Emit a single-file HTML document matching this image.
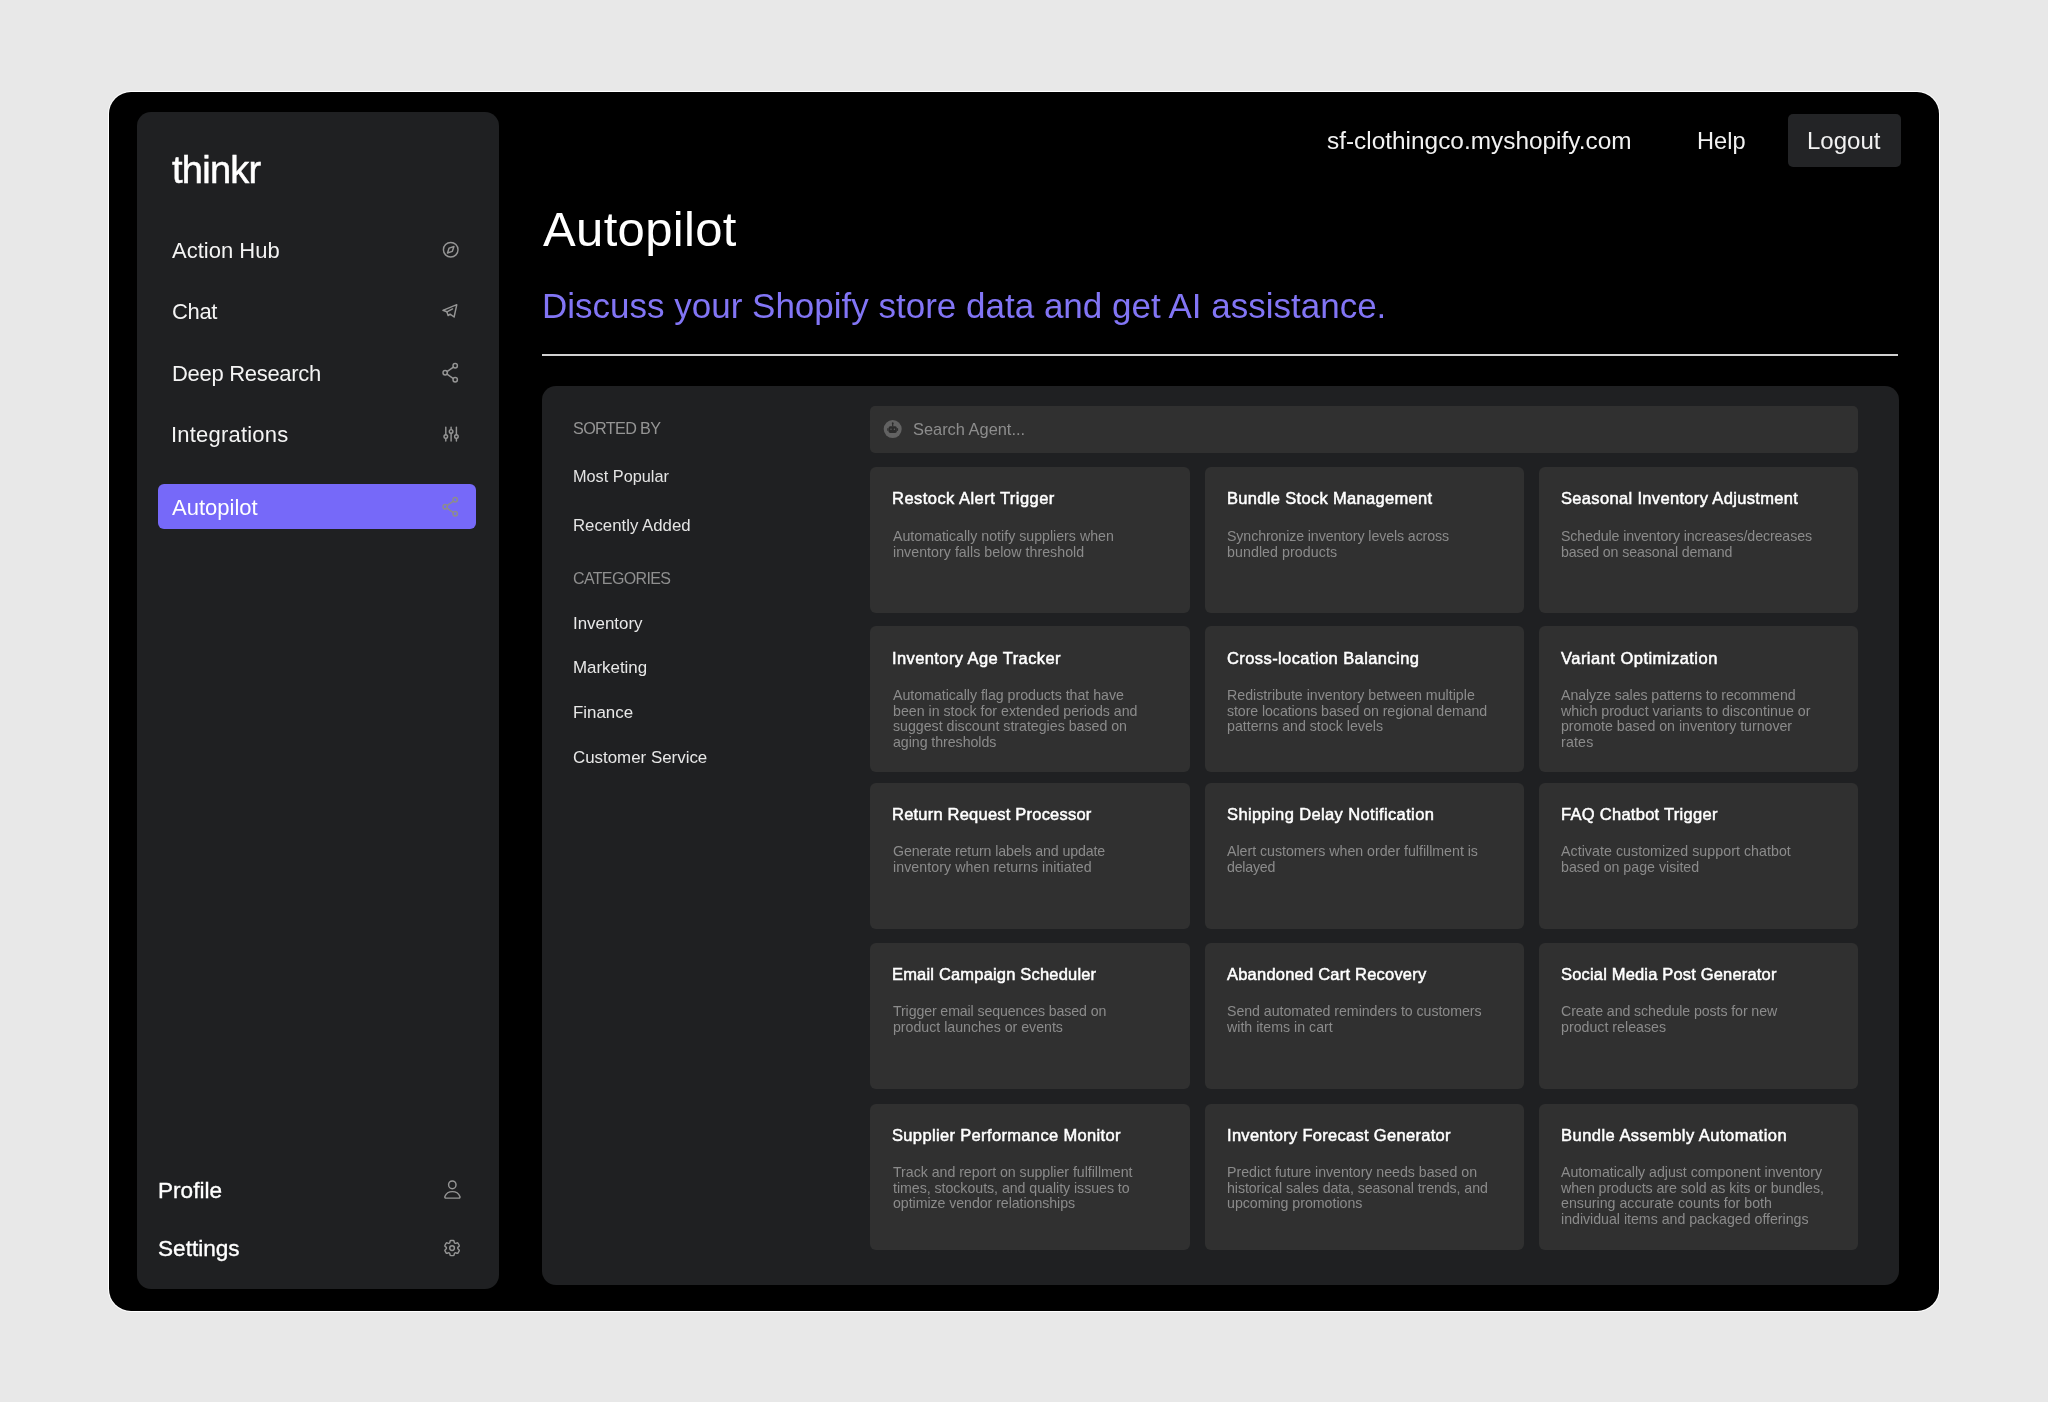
<!DOCTYPE html>
<html><head><meta charset="utf-8"><title>thinkr - Autopilot</title>
<style>
html,body{margin:0;padding:0;}
body{width:2048px;height:1402px;background:#e8e8e8;position:relative;overflow:hidden;font-family:"Liberation Sans", sans-serif;}
.t{position:absolute;white-space:nowrap;will-change:transform;}
</style></head><body>
<div style="position:absolute;left:109px;top:92px;width:1830px;height:1218.5px;background:#000;border-radius:22px;box-shadow:0 0 0 1px #fff;"></div>
<div style="position:absolute;left:137px;top:112px;width:362px;height:1176.5px;background:#1f2022;border-radius:14px;"></div>
<div class="t" style="left:172.3px;top:146.00px;font-size:38px;line-height:48px;color:#fff;-webkit-text-stroke:0.5px #fff;letter-spacing:-0.74px">thinkr</div>
<div class="t" style="left:171.50px;top:237.00px;font-size:22px;line-height:28px;color:#f4f4f4;">Action Hub</div>
<div class="t" style="left:172.00px;top:298.00px;font-size:22px;line-height:28px;color:#f4f4f4;letter-spacing:-0.35px;">Chat</div>
<div class="t" style="left:171.50px;top:360.00px;font-size:22px;line-height:28px;color:#f4f4f4;letter-spacing:-0.3px;">Deep Research</div>
<div class="t" style="left:171.00px;top:421.00px;font-size:22px;line-height:28px;color:#f4f4f4;letter-spacing:0.2px;">Integrations</div>
<div style="position:absolute;left:158px;top:484px;width:318px;height:45px;background:#7669f9;border-radius:6px;"></div>
<div class="t" style="left:172.00px;top:494.00px;font-size:22px;line-height:28px;color:#fff;">Autopilot</div>
<div class="t" style="left:157.50px;top:1177.00px;font-size:22.6px;line-height:28px;color:#fff;-webkit-text-stroke:0.35px #fff;">Profile</div>
<div class="t" style="left:157.50px;top:1235.00px;font-size:22.6px;line-height:28px;color:#fff;-webkit-text-stroke:0.35px #fff;">Settings</div>
<svg style="position:absolute;left:440.68px;top:240.38px" width="19.44" height="19.44" viewBox="0 0 24 24" fill="none" stroke="#959595" stroke-width="1.790" stroke-linecap="round" stroke-linejoin="round"><path d="M8 16l2 -6l6 -2l-2 6l-6 2"/><circle cx="12" cy="12" r="9"/></svg>
<svg style="position:absolute;left:0;top:0;overflow:visible" width="1" height="1" fill="none" stroke="#959595" stroke-width="1.45" stroke-linecap="round" stroke-linejoin="round"><path d="M442.9 310.3 L456.8 304.7 L454.1 317.0 L450.1 314.2 L448.1 315.6 L446.9 311.8 Z"/><path d="M446.9 311.8 L452.6 308.9"/></svg>
<svg style="position:absolute;left:0;top:0;overflow:visible" width="1" height="1" fill="none" stroke="#959595" stroke-width="1.45" stroke-linecap="round"><circle cx="445.2" cy="372.8" r="2.2"/><circle cx="455.2" cy="365.8" r="2.2"/><circle cx="455.2" cy="379.8" r="2.2"/><line x1="447.00" y1="371.54" x2="453.40" y2="367.06"/><line x1="447.00" y1="374.06" x2="453.40" y2="378.54"/></svg>
<svg style="position:absolute;left:0;top:0;overflow:visible" width="1" height="1" fill="none" stroke="#8d8d8d" stroke-width="1.45" stroke-linecap="round"><circle cx="445.2" cy="506.8" r="2.2"/><circle cx="455.2" cy="499.8" r="2.2"/><circle cx="455.2" cy="513.8" r="2.2"/><line x1="447.00" y1="505.54" x2="453.40" y2="501.06"/><line x1="447.00" y1="508.06" x2="453.40" y2="512.54"/></svg>
<svg style="position:absolute;left:0;top:0;overflow:visible" width="1" height="1" fill="none" stroke="#959595" stroke-width="1.45" stroke-linecap="round"><line x1="445.8" y1="427.1" x2="445.8" y2="434.80"/><circle cx="445.8" cy="436.6" r="1.8"/><line x1="445.8" y1="438.40" x2="445.8" y2="440.9"/><line x1="451.1" y1="427.1" x2="451.1" y2="429.60"/><circle cx="451.1" cy="431.4" r="1.8"/><line x1="451.1" y1="433.20" x2="451.1" y2="440.9"/><line x1="456.4" y1="427.1" x2="456.4" y2="434.80"/><circle cx="456.4" cy="436.6" r="1.8"/><line x1="456.4" y1="438.40" x2="456.4" y2="440.9"/></svg>
<svg style="position:absolute;left:0;top:0;overflow:visible" width="1" height="1" fill="none" stroke="#959595" stroke-width="1.45" stroke-linejoin="round"><ellipse cx="452.3" cy="1184.8" rx="3.7" ry="3.9"/><path d="M446.2 1198.1 H458.6 Q460.4 1198.1 459.9 1196.5 C458.6 1193.2 455.8 1191.6 452.4 1191.6 C449 1191.6 446.2 1193.2 444.9 1196.5 Q444.4 1198.1 446.2 1198.1 Z"/></svg>
<svg style="position:absolute;left:442.42px;top:1237.72px" width="20.16" height="20.16" viewBox="0 0 24 24" fill="none" stroke="#959595" stroke-width="1.726" stroke-linecap="round" stroke-linejoin="round"><path d="M9.594 3.94c.09-.542.56-.94 1.11-.94h2.593c.55 0 1.02.398 1.11.94l.213 1.281c.063.374.313.686.645.87.074.04.147.083.22.127.325.196.72.257 1.075.124l1.217-.456a1.125 1.125 0 0 1 1.37.49l1.296 2.247a1.125 1.125 0 0 1-.26 1.431l-1.003.827c-.293.241-.438.613-.43.992a7.723 7.723 0 0 1 0 .255c-.008.378.137.75.43.991l1.004.827c.424.35.534.955.26 1.43l-1.298 2.247a1.125 1.125 0 0 1-1.369.491l-1.217-.456c-.355-.133-.75-.072-1.076.124a6.47 6.47 0 0 1-.22.128c-.331.183-.581.495-.644.869l-.213 1.281c-.09.543-.56.94-1.11.94h-2.594c-.55 0-1.019-.398-1.11-.94l-.213-1.281c-.062-.374-.312-.686-.644-.87a6.52 6.52 0 0 1-.22-.127c-.325-.196-.72-.257-1.076-.124l-1.217.456a1.125 1.125 0 0 1-1.369-.49l-1.297-2.247a1.125 1.125 0 0 1 .26-1.431l1.004-.827c.292-.24.437-.613.43-.991a6.932 6.932 0 0 1 0-.255c.007-.38-.138-.751-.43-.992l-1.004-.827a1.125 1.125 0 0 1-.26-1.43l1.297-2.247a1.125 1.125 0 0 1 1.37-.491l1.216.456c.356.133.751.072 1.076-.124.072-.044.146-.086.22-.128.332-.183.582-.495.644-.869l.214-1.28Z"/><circle cx="12" cy="12" r="2.8"/></svg>
<div class="t" style="left:1326.50px;top:126.00px;font-size:24.4px;line-height:30px;color:#f2f2f2;">sf-clothingco.myshopify.com</div>
<div class="t" style="left:1697.00px;top:126.00px;font-size:23.6px;line-height:30px;color:#f2f2f2;">Help</div>
<div style="position:absolute;left:1788px;top:114px;width:113px;height:53px;background:#232426;border-radius:5px;"></div>
<div class="t" style="left:1807.00px;top:126.00px;font-size:24px;line-height:30px;color:#f2f2f2;">Logout</div>
<div class="t" style="left:543.00px;top:199.00px;font-size:49px;line-height:61px;color:#fff;letter-spacing:0.35px;">Autopilot</div>
<div class="t" style="left:542.00px;top:284.00px;font-size:35px;line-height:44px;color:#8275f5;">Discuss your Shopify store data and get AI assistance.</div>
<div style="position:absolute;left:542px;top:354.2px;width:1356px;height:1.6999999999999886px;background:#d0d0d0;border-radius:0px;"></div>
<div style="position:absolute;left:542px;top:386px;width:1356.7px;height:899px;background:#1f2022;border-radius:14px;"></div>
<div class="t" style="left:573.00px;top:418.00px;font-size:16.2px;line-height:20px;color:#959595;letter-spacing:-0.65px;">SORTED BY</div>
<div class="t" style="left:572.50px;top:466.00px;font-size:16.3px;line-height:20px;color:#e4e4e4;">Most Popular</div>
<div class="t" style="left:572.50px;top:515.00px;font-size:16.8px;line-height:21px;color:#e4e4e4;">Recently Added</div>
<div class="t" style="left:573.00px;top:569.00px;font-size:16.0px;line-height:20px;color:#8f8f8f;letter-spacing:-0.65px;">CATEGORIES</div>
<div class="t" style="left:572.50px;top:613.00px;font-size:16.9px;line-height:21px;color:#e8e8e8;">Inventory</div>
<div class="t" style="left:572.50px;top:657.00px;font-size:16.9px;line-height:21px;color:#e8e8e8;">Marketing</div>
<div class="t" style="left:572.50px;top:702.00px;font-size:16.9px;line-height:21px;color:#e8e8e8;">Finance</div>
<div class="t" style="left:572.50px;top:747.00px;font-size:16.9px;line-height:21px;color:#e8e8e8;">Customer Service</div>
<div style="position:absolute;left:870px;top:405.7px;width:987.5999999999999px;height:47.19999999999999px;background:#303030;border-radius:5px;"></div>
<svg style="position:absolute;left:0;top:0;overflow:visible" width="1" height="1"><circle cx="892.7" cy="429.1" r="9" fill="#626262"/><rect x="888.6" y="426.3" width="8.2" height="6.6" rx="1.6" fill="#2b2b2b"/><line x1="892.7" y1="423.2" x2="892.7" y2="426.3" stroke="#2b2b2b" stroke-width="1.2"/><circle cx="892.7" cy="423.2" r="0.9" fill="#2b2b2b"/><rect x="887.3" y="428.2" width="1.2" height="2.6" fill="#2b2b2b"/><rect x="896.9" y="428.2" width="1.2" height="2.6" fill="#2b2b2b"/><circle cx="891" cy="429.3" r="0.7" fill="#626262"/><circle cx="894.4" cy="429.3" r="0.7" fill="#626262"/></svg>
<div class="t" style="left:912.50px;top:419.00px;font-size:16.4px;line-height:20px;color:#8d8d8d;">Search Agent...</div>
<div style="position:absolute;left:870.3px;top:467px;width:319.5px;height:146px;background:#303030;border-radius:6px;"></div>
<div class="t" style="left:892.30px;top:488.00px;font-size:16.5px;line-height:21px;color:#fff;letter-spacing:0.46px;-webkit-text-stroke:0.5px #fff;">Restock Alert Trigger</div>
<div class="t" style="left:892.50px;top:527.00px;font-size:14.2px;line-height:18px;color:#8b8b8b;letter-spacing:0.0px;">Automatically notify suppliers when</div>
<div class="t" style="left:892.50px;top:543.00px;font-size:14.2px;line-height:18px;color:#8b8b8b;letter-spacing:0.037px;">inventory falls below threshold</div>
<div style="position:absolute;left:1204.5px;top:467px;width:319.5px;height:146px;background:#303030;border-radius:6px;"></div>
<div class="t" style="left:1226.50px;top:488.00px;font-size:16.5px;line-height:21px;color:#fff;letter-spacing:0.319px;-webkit-text-stroke:0.5px #fff;">Bundle Stock Management</div>
<div class="t" style="left:1226.70px;top:527.00px;font-size:14.2px;line-height:18px;color:#8b8b8b;letter-spacing:-0.1px;">Synchronize inventory levels across</div>
<div class="t" style="left:1226.70px;top:543.00px;font-size:14.2px;line-height:18px;color:#8b8b8b;letter-spacing:0.079px;">bundled products</div>
<div style="position:absolute;left:1538.8px;top:467px;width:319.5px;height:146px;background:#303030;border-radius:6px;"></div>
<div class="t" style="left:1560.80px;top:488.00px;font-size:16.5px;line-height:21px;color:#fff;letter-spacing:0.335px;-webkit-text-stroke:0.5px #fff;">Seasonal Inventory Adjustment</div>
<div class="t" style="left:1561.00px;top:527.00px;font-size:14.2px;line-height:18px;color:#8b8b8b;letter-spacing:-0.1px;">Schedule inventory increases/decreases</div>
<div class="t" style="left:1561.00px;top:543.00px;font-size:14.2px;line-height:18px;color:#8b8b8b;letter-spacing:-0.127px;">based on seasonal demand</div>
<div style="position:absolute;left:870.3px;top:626px;width:319.5px;height:146px;background:#303030;border-radius:6px;"></div>
<div class="t" style="left:892.30px;top:648.00px;font-size:16.5px;line-height:21px;color:#fff;letter-spacing:0.4px;-webkit-text-stroke:0.5px #fff;">Inventory Age Tracker</div>
<div class="t" style="left:892.50px;top:686.00px;font-size:14.2px;line-height:18px;color:#8b8b8b;letter-spacing:-0.028px;">Automatically flag products that have</div>
<div class="t" style="left:892.50px;top:702.00px;font-size:14.2px;line-height:18px;color:#8b8b8b;letter-spacing:0.0px;">been in stock for extended periods and</div>
<div class="t" style="left:892.50px;top:717.00px;font-size:14.2px;line-height:18px;color:#8b8b8b;letter-spacing:-0.007px;">suggest discount strategies based on</div>
<div class="t" style="left:892.50px;top:733.00px;font-size:14.2px;line-height:18px;color:#8b8b8b;letter-spacing:-0.048px;">aging thresholds</div>
<div style="position:absolute;left:1204.5px;top:626px;width:319.5px;height:146px;background:#303030;border-radius:6px;"></div>
<div class="t" style="left:1226.50px;top:648.00px;font-size:16.5px;line-height:21px;color:#fff;letter-spacing:0.409px;-webkit-text-stroke:0.5px #fff;">Cross-location Balancing</div>
<div class="t" style="left:1226.70px;top:686.00px;font-size:14.2px;line-height:18px;color:#8b8b8b;letter-spacing:0.004px;">Redistribute inventory between multiple</div>
<div class="t" style="left:1226.70px;top:702.00px;font-size:14.2px;line-height:18px;color:#8b8b8b;letter-spacing:-0.082px;">store locations based on regional demand</div>
<div class="t" style="left:1226.70px;top:717.00px;font-size:14.2px;line-height:18px;color:#8b8b8b;letter-spacing:-0.006px;">patterns and stock levels</div>
<div style="position:absolute;left:1538.8px;top:626px;width:319.5px;height:146px;background:#303030;border-radius:6px;"></div>
<div class="t" style="left:1560.80px;top:648.00px;font-size:16.5px;line-height:21px;color:#fff;letter-spacing:0.473px;-webkit-text-stroke:0.5px #fff;">Variant Optimization</div>
<div class="t" style="left:1561.00px;top:686.00px;font-size:14.2px;line-height:18px;color:#8b8b8b;letter-spacing:-0.082px;">Analyze sales patterns to recommend</div>
<div class="t" style="left:1561.00px;top:702.00px;font-size:14.2px;line-height:18px;color:#8b8b8b;letter-spacing:0.004px;">which product variants to discontinue or</div>
<div class="t" style="left:1561.00px;top:717.00px;font-size:14.2px;line-height:18px;color:#8b8b8b;letter-spacing:-0.024px;">promote based on inventory turnover</div>
<div class="t" style="left:1561.00px;top:733.00px;font-size:14.2px;line-height:18px;color:#8b8b8b;letter-spacing:0.175px;">rates</div>
<div style="position:absolute;left:870.3px;top:783px;width:319.5px;height:146px;background:#303030;border-radius:6px;"></div>
<div class="t" style="left:892.30px;top:804.00px;font-size:16.5px;line-height:21px;color:#fff;letter-spacing:0.212px;-webkit-text-stroke:0.5px #fff;">Return Request Processor</div>
<div class="t" style="left:892.50px;top:842.00px;font-size:14.2px;line-height:18px;color:#8b8b8b;letter-spacing:-0.123px;">Generate return labels and update</div>
<div class="t" style="left:892.50px;top:858.00px;font-size:14.2px;line-height:18px;color:#8b8b8b;letter-spacing:0.071px;">inventory when returns initiated</div>
<div style="position:absolute;left:1204.5px;top:783px;width:319.5px;height:146px;background:#303030;border-radius:6px;"></div>
<div class="t" style="left:1226.50px;top:804.00px;font-size:16.5px;line-height:21px;color:#fff;letter-spacing:0.372px;-webkit-text-stroke:0.5px #fff;">Shipping Delay Notification</div>
<div class="t" style="left:1226.70px;top:842.00px;font-size:14.2px;line-height:18px;color:#8b8b8b;letter-spacing:-0.014px;">Alert customers when order fulfillment is</div>
<div class="t" style="left:1226.70px;top:858.00px;font-size:14.2px;line-height:18px;color:#8b8b8b;letter-spacing:-0.215px;">delayed</div>
<div style="position:absolute;left:1538.8px;top:783px;width:319.5px;height:146px;background:#303030;border-radius:6px;"></div>
<div class="t" style="left:1560.80px;top:804.00px;font-size:16.5px;line-height:21px;color:#fff;letter-spacing:0.282px;-webkit-text-stroke:0.5px #fff;">FAQ Chatbot Trigger</div>
<div class="t" style="left:1561.00px;top:842.00px;font-size:14.2px;line-height:18px;color:#8b8b8b;letter-spacing:0.056px;">Activate customized support chatbot</div>
<div class="t" style="left:1561.00px;top:858.00px;font-size:14.2px;line-height:18px;color:#8b8b8b;letter-spacing:0.005px;">based on page visited</div>
<div style="position:absolute;left:870.3px;top:943px;width:319.5px;height:146px;background:#303030;border-radius:6px;"></div>
<div class="t" style="left:892.30px;top:964.00px;font-size:16.5px;line-height:21px;color:#fff;letter-spacing:0.18px;-webkit-text-stroke:0.5px #fff;">Email Campaign Scheduler</div>
<div class="t" style="left:892.50px;top:1002.00px;font-size:14.2px;line-height:18px;color:#8b8b8b;letter-spacing:-0.124px;">Trigger email sequences based on</div>
<div class="t" style="left:892.50px;top:1018.00px;font-size:14.2px;line-height:18px;color:#8b8b8b;letter-spacing:-0.016px;">product launches or events</div>
<div style="position:absolute;left:1204.5px;top:943px;width:319.5px;height:146px;background:#303030;border-radius:6px;"></div>
<div class="t" style="left:1226.50px;top:964.00px;font-size:16.5px;line-height:21px;color:#fff;letter-spacing:0.216px;-webkit-text-stroke:0.5px #fff;">Abandoned Cart Recovery</div>
<div class="t" style="left:1226.70px;top:1002.00px;font-size:14.2px;line-height:18px;color:#8b8b8b;letter-spacing:-0.048px;">Send automated reminders to customers</div>
<div class="t" style="left:1226.70px;top:1018.00px;font-size:14.2px;line-height:18px;color:#8b8b8b;letter-spacing:0.008px;">with items in cart</div>
<div style="position:absolute;left:1538.8px;top:943px;width:319.5px;height:146px;background:#303030;border-radius:6px;"></div>
<div class="t" style="left:1560.80px;top:964.00px;font-size:16.5px;line-height:21px;color:#fff;letter-spacing:0.173px;-webkit-text-stroke:0.5px #fff;">Social Media Post Generator</div>
<div class="t" style="left:1561.00px;top:1002.00px;font-size:14.2px;line-height:18px;color:#8b8b8b;letter-spacing:-0.095px;">Create and schedule posts for new</div>
<div class="t" style="left:1561.00px;top:1018.00px;font-size:14.2px;line-height:18px;color:#8b8b8b;letter-spacing:0.012px;">product releases</div>
<div style="position:absolute;left:870.3px;top:1104px;width:319.5px;height:146px;background:#303030;border-radius:6px;"></div>
<div class="t" style="left:892.30px;top:1125.00px;font-size:16.5px;line-height:21px;color:#fff;letter-spacing:0.346px;-webkit-text-stroke:0.5px #fff;">Supplier Performance Monitor</div>
<div class="t" style="left:892.50px;top:1163.00px;font-size:14.2px;line-height:18px;color:#8b8b8b;letter-spacing:-0.032px;">Track and report on supplier fulfillment</div>
<div class="t" style="left:892.50px;top:1179.00px;font-size:14.2px;line-height:18px;color:#8b8b8b;letter-spacing:-0.039px;">times, stockouts, and quality issues to</div>
<div class="t" style="left:892.50px;top:1194.00px;font-size:14.2px;line-height:18px;color:#8b8b8b;letter-spacing:-0.059px;">optimize vendor relationships</div>
<div style="position:absolute;left:1204.5px;top:1104px;width:319.5px;height:146px;background:#303030;border-radius:6px;"></div>
<div class="t" style="left:1226.50px;top:1125.00px;font-size:16.5px;line-height:21px;color:#fff;letter-spacing:0.296px;-webkit-text-stroke:0.5px #fff;">Inventory Forecast Generator</div>
<div class="t" style="left:1226.70px;top:1163.00px;font-size:14.2px;line-height:18px;color:#8b8b8b;letter-spacing:-0.02px;">Predict future inventory needs based on</div>
<div class="t" style="left:1226.70px;top:1179.00px;font-size:14.2px;line-height:18px;color:#8b8b8b;letter-spacing:-0.08px;">historical sales data, seasonal trends, and</div>
<div class="t" style="left:1226.70px;top:1194.00px;font-size:14.2px;line-height:18px;color:#8b8b8b;letter-spacing:-0.014px;">upcoming promotions</div>
<div style="position:absolute;left:1538.8px;top:1104px;width:319.5px;height:146px;background:#303030;border-radius:6px;"></div>
<div class="t" style="left:1560.80px;top:1125.00px;font-size:16.5px;line-height:21px;color:#fff;letter-spacing:0.476px;-webkit-text-stroke:0.5px #fff;">Bundle Assembly Automation</div>
<div class="t" style="left:1561.00px;top:1163.00px;font-size:14.2px;line-height:18px;color:#8b8b8b;letter-spacing:-0.021px;">Automatically adjust component inventory</div>
<div class="t" style="left:1561.00px;top:1179.00px;font-size:14.2px;line-height:18px;color:#8b8b8b;letter-spacing:-0.05px;">when products are sold as kits or bundles,</div>
<div class="t" style="left:1561.00px;top:1194.00px;font-size:14.2px;line-height:18px;color:#8b8b8b;letter-spacing:0.011px;">ensuring accurate counts for both</div>
<div class="t" style="left:1561.00px;top:1210.00px;font-size:14.2px;line-height:18px;color:#8b8b8b;letter-spacing:-0.017px;">individual items and packaged offerings</div>
</body></html>
